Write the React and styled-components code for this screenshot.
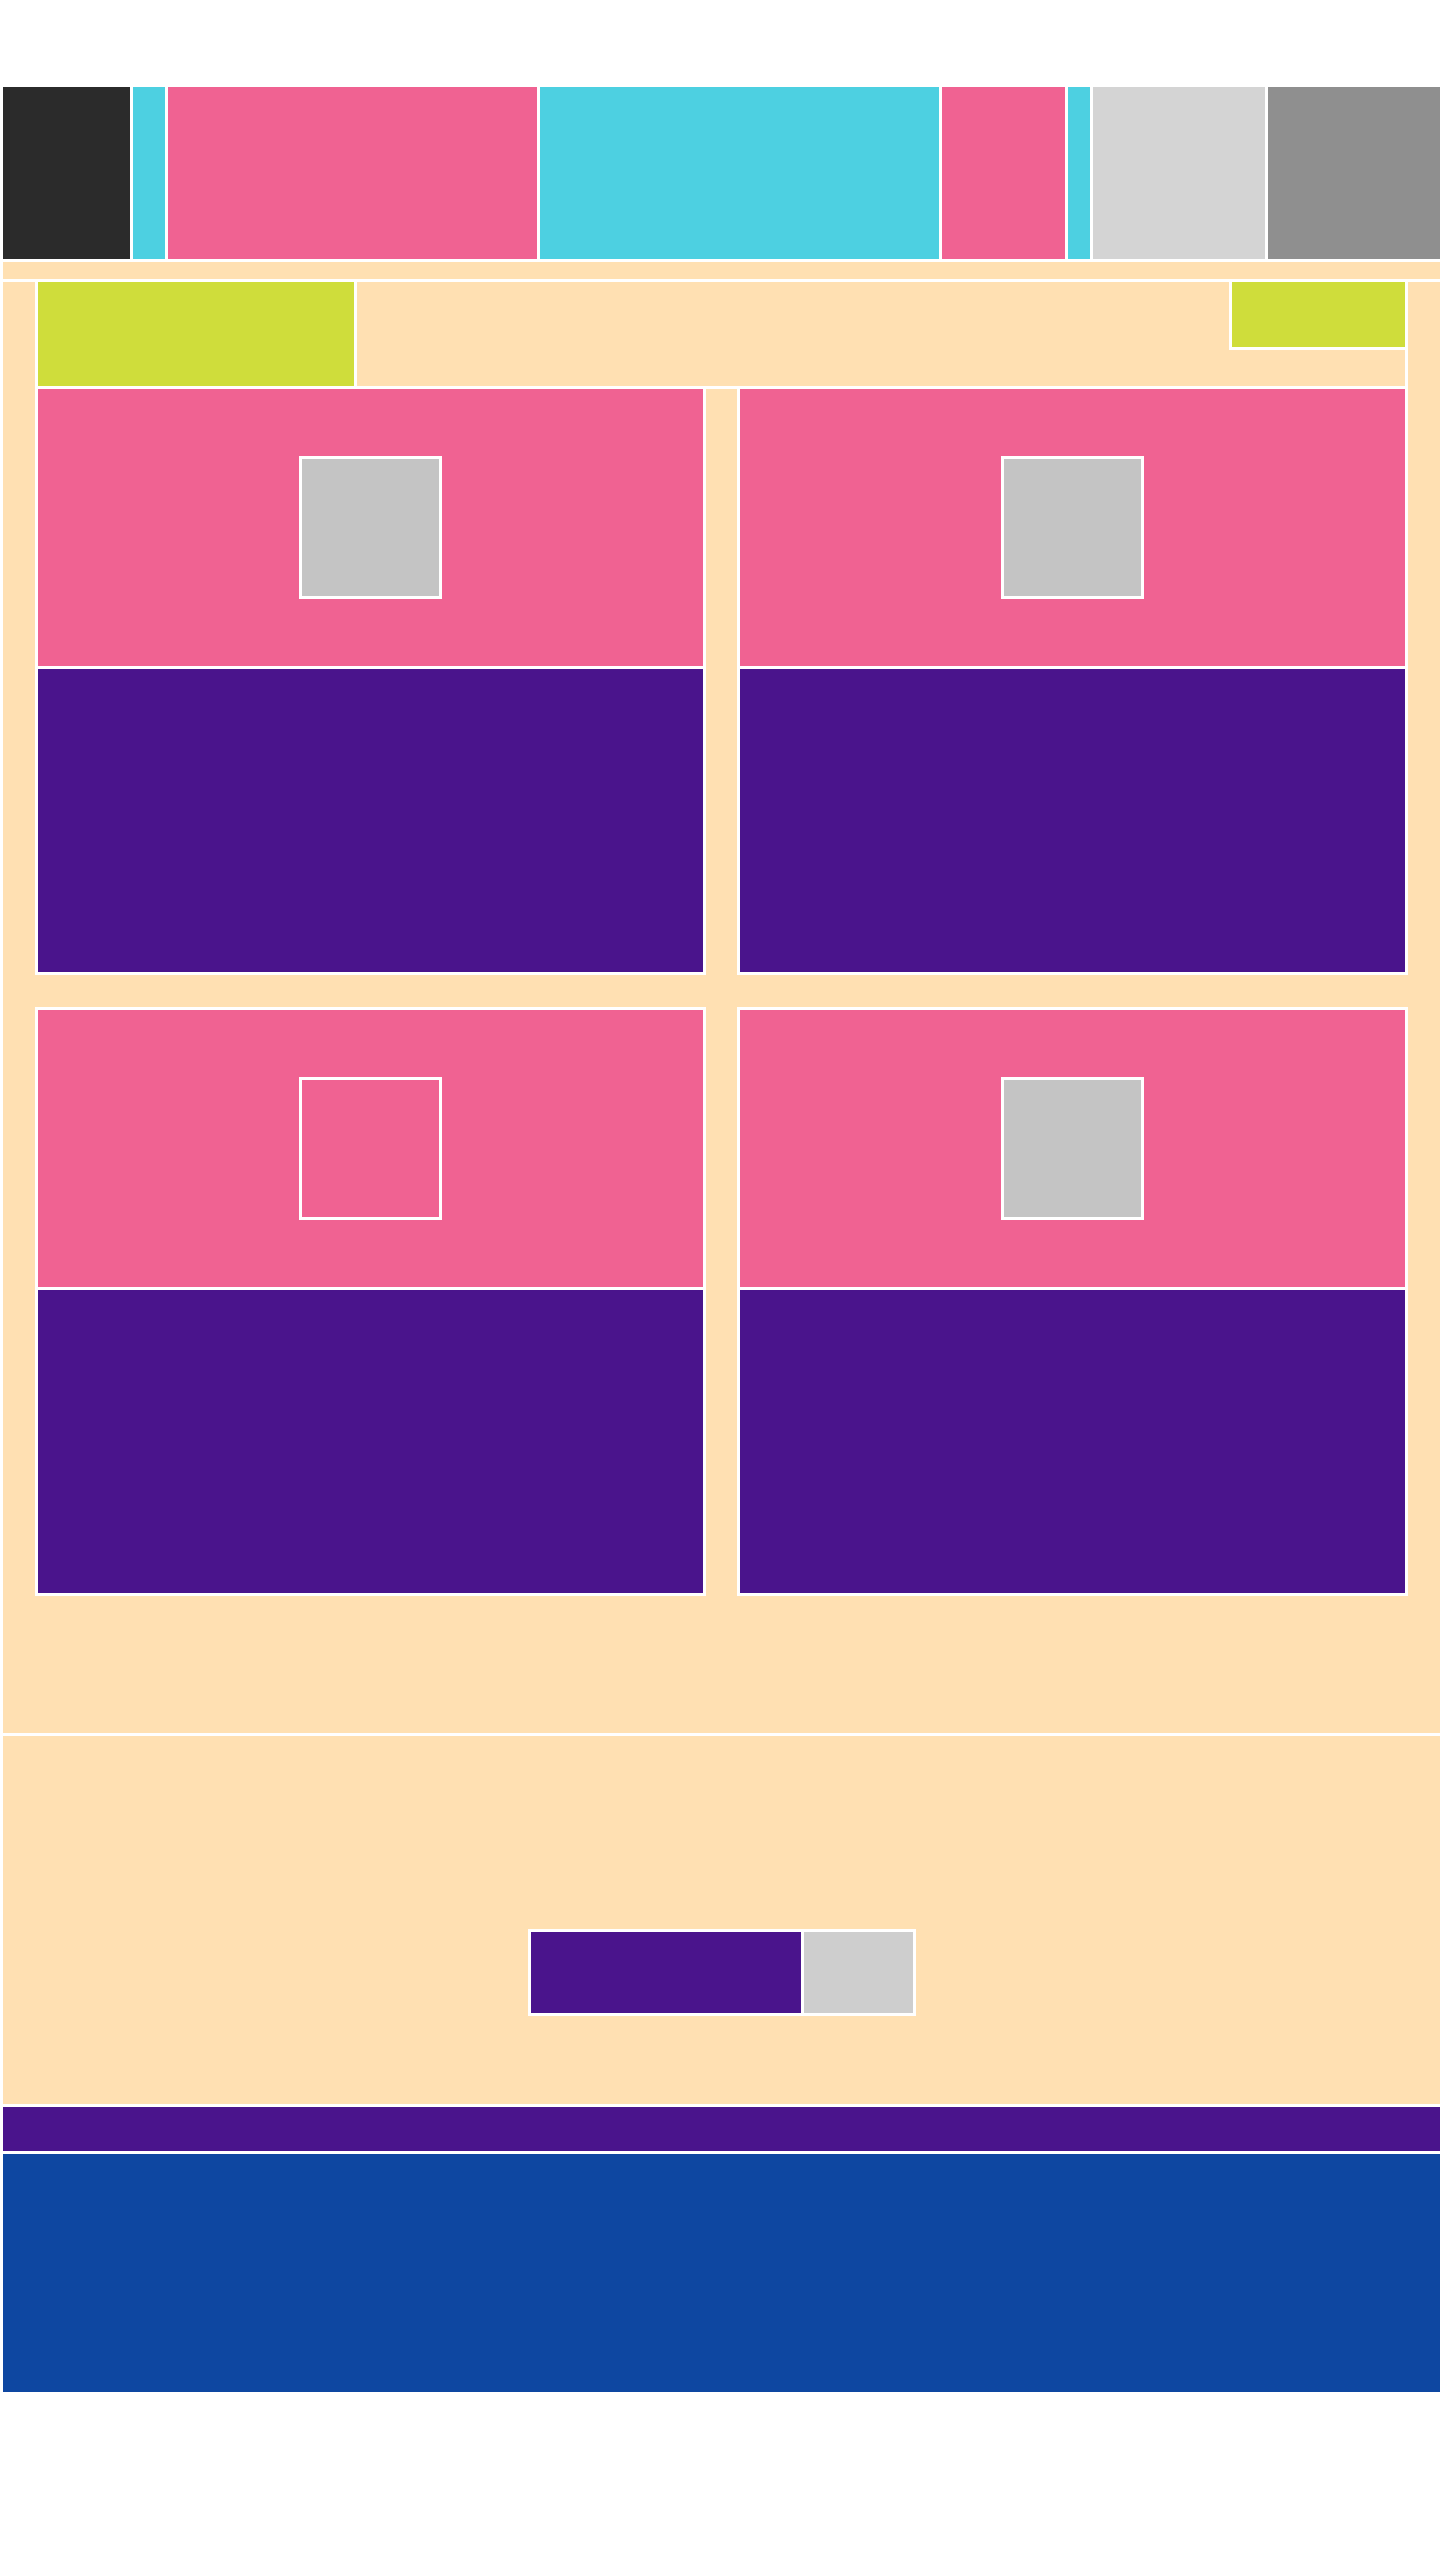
import React from 'react'
import styled, { createGlobalStyle } from 'styled-components'

const GlobalStyle = createGlobalStyle`
  html, body {
    margin: 0;
    padding: 0;
    background: #fff;
  }
  body {
    font-family: "Liberation Sans", Arial, sans-serif;
  }
`

const Page = styled.div`
  display: flex;
  flex-direction: column;
  gap: 3px;
  padding: 87px 0 0 3px;
  background: #fff;
`

const Header = styled.header`
  display: flex;
  gap: 3px;
  height: 172px;
`

const NavBlock = styled.div`
  flex: 0 0 ${p => p.$w}px;
  background: ${p => p.$bg};
`

const Strip = styled.div`
  height: 17px;
  background: #ffe0b2;
`

const Main = styled.main`
  background: #ffe0b2;
  padding: 0 35px 140px;
`

const Toolbar = styled.div`
  display: flex;
  justify-content: space-between;
  align-items: flex-start;
  height: 104px;
  outline: 3px solid #fff;
`

const Title = styled.div`
  width: 316px;
  height: 104px;
  background: #cfdd3b;
  outline: 3px solid #fff;
`

const Action = styled.div`
  width: 173px;
  height: 65px;
  background: #cfdd3b;
  outline: 3px solid #fff;
`

const Grid = styled.div`
  display: grid;
  grid-template-columns: 665px 665px;
  column-gap: 37px;
  row-gap: 38px;
  margin-top: 3px;
`

const Card = styled.article`
  display: flex;
  flex-direction: column;
  gap: 3px;
  background: #fff;
  outline: 3px solid #fff;
`

const Media = styled.div`
  height: 277px;
  background: #f06292;
  display: flex;
  align-items: center;
  justify-content: center;
`

const Thumb = styled.div`
  width: 137px;
  height: 137px;
  background: ${p => (p.$empty ? 'transparent' : '#c4c4c4')};
  outline: 3px solid #fff;
`

const CardBody = styled.div`
  height: 303px;
  background: #4a148c;
`

const Subscribe = styled.section`
  height: 368px;
  box-sizing: border-box;
  padding-top: 196px;
  background: #ffe0b2;
  display: flex;
  justify-content: center;
  align-items: flex-start;
`

const Form = styled.form`
  display: flex;
  gap: 3px;
  height: 81px;
  background: #fff;
  outline: 3px solid #fff;
`

const Input = styled.input`
  width: 270px;
  height: 81px;
  box-sizing: border-box;
  border: none;
  padding: 0;
  margin: 0;
  background: #4a148c;
`

const Button = styled.button`
  width: 109px;
  height: 81px;
  border: none;
  padding: 0;
  margin: 0;
  background: #cecece;
`

const BottomNav = styled.div`
  height: 44px;
  background: #4a148c;
`

const Footer = styled.footer`
  height: 238px;
  background: #0e47a1;
`

const navBlocks = [
  { w: 127, bg: '#2b2b2b' },
  { w: 32, bg: '#4dd0e1' },
  { w: 369, bg: '#f06292' },
  { w: 399, bg: '#4dd0e1' },
  { w: 123, bg: '#f06292' },
  { w: 22, bg: '#4dd0e1' },
  { w: 172, bg: '#d4d4d4' },
  { w: 172, bg: '#8f8f8f' },
]

const cards = [{ empty: false }, { empty: false }, { empty: true }, { empty: false }]

export default function App() {
  return (
    <>
      <GlobalStyle />
      <Page>
        <Header>
          {navBlocks.map((b, i) => (
            <NavBlock key={i} $w={b.w} $bg={b.bg} />
          ))}
        </Header>
        <Strip />
        <Main>
          <Toolbar>
            <Title />
            <Action />
          </Toolbar>
          <Grid>
            {cards.map((c, i) => (
              <Card key={i}>
                <Media>
                  <Thumb $empty={c.empty} />
                </Media>
                <CardBody />
              </Card>
            ))}
          </Grid>
        </Main>
        <Subscribe>
          <Form onSubmit={e => e.preventDefault()}>
            <Input type="text" aria-label="email" />
            <Button type="submit" aria-label="subscribe" />
          </Form>
        </Subscribe>
        <BottomNav />
        <Footer />
      </Page>
    </>
  )
}
